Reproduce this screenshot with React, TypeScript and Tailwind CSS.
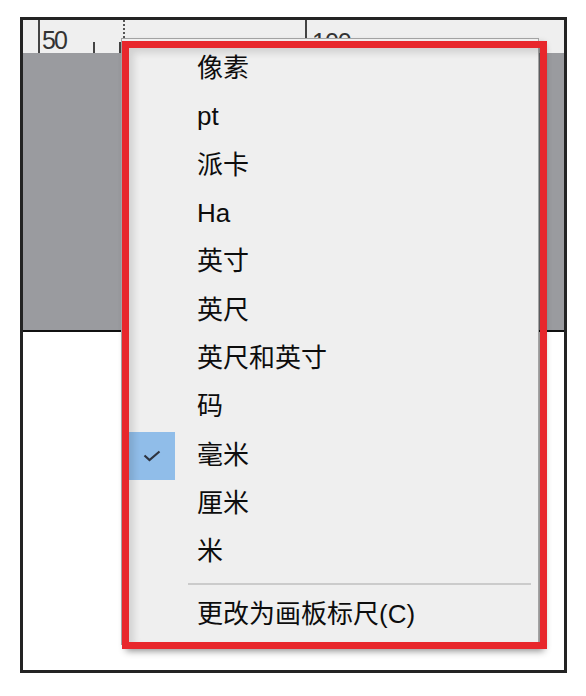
import React from "react";

const items = ["像素", "pt", "派卡", "Ha", "英寸", "英尺", "英尺和英寸", "码", "毫米", "厘米", "米"];

export default function App() {
  return (
    <div
      className="relative w-[586px] h-[696px] bg-white overflow-hidden pl-[20px] pt-[17px]"
      style={{ fontFamily: '"Liberation Sans", "Noto Sans CJK SC", sans-serif' }}
    >
      <div className="w-[547px] h-[656px] border-[3px] border-[#232323] flex flex-col">
        <div className="h-[33px] bg-[#efefef] flex items-stretch pl-[15px] text-[25px] leading-[25px] text-[#333]">
          <div className="w-[2px] bg-[#444]" />
          <div className="ml-[2px] pt-[8px] w-[51px] tracking-[-2px]">50</div>
          <div className="w-[2px] mt-[22px] bg-[#444]" />
          <div className="w-[24px]" />
          <div className="w-[2px] mt-[22px] bg-[#444]" />
          <div className="w-[2px]" />
          <div className="w-0 h-[18px] border-l-[2px] border-dotted border-[#555]" />
          <div className="w-[180px]" />
          <div className="w-[2px] bg-[#444]" />
          <div className="ml-[5px] pt-[10px] tracking-[-1px]">100</div>
        </div>
        <div className="h-[277px] bg-[#9a9b9f]" />
        <div className="h-[2px] bg-[#111]" />
        <div className="flex-1 bg-white" />
      </div>

      {/* context menu */}
      <div className="absolute left-[121px] top-[38px] w-[418px] h-[607px] bg-[#efefef] border border-[#a3a3a3] shadow-[5px_6px_7px_rgba(0,0,0,0.45)] flex flex-col pt-[5px]">
        {items.map((t, i) => (
          <div key={t} className="h-[48.3px] flex items-center text-[26px] leading-none text-[#0d0d0d]">
            <div className="w-[75px] h-full flex items-center pl-[7px]">
              {i === 8 && (
                <div className="w-[46px] h-[48px] mt-[2px] bg-[#90bde9] flex items-center justify-center">
                  <svg width="18" height="12" viewBox="0 0 18 12">
                    <path d="M1.5 5.5 L6.5 10 L16.5 1.5" fill="none" stroke="#2e3440" strokeWidth="2.2" />
                  </svg>
                </div>
              )}
            </div>
            <span>{t}</span>
          </div>
        ))}
        <div className="ml-[66px] mr-[7px] mt-[8px] mb-[5px] h-[2px] bg-[#cbcbcb]" />
        <div className="h-[48px] flex items-center pl-[75px] text-[26px] leading-none text-[#0d0d0d]">更改为画板标尺(C)</div>
      </div>

      {/* red annotation */}
      <div className="absolute left-[122px] top-[41px] w-[425px] h-[608px] border-[7px] border-[#e8272c] shadow-[inset_5px_5px_7px_rgba(0,0,0,0.12)] pointer-events-none" />
    </div>
  );
}
